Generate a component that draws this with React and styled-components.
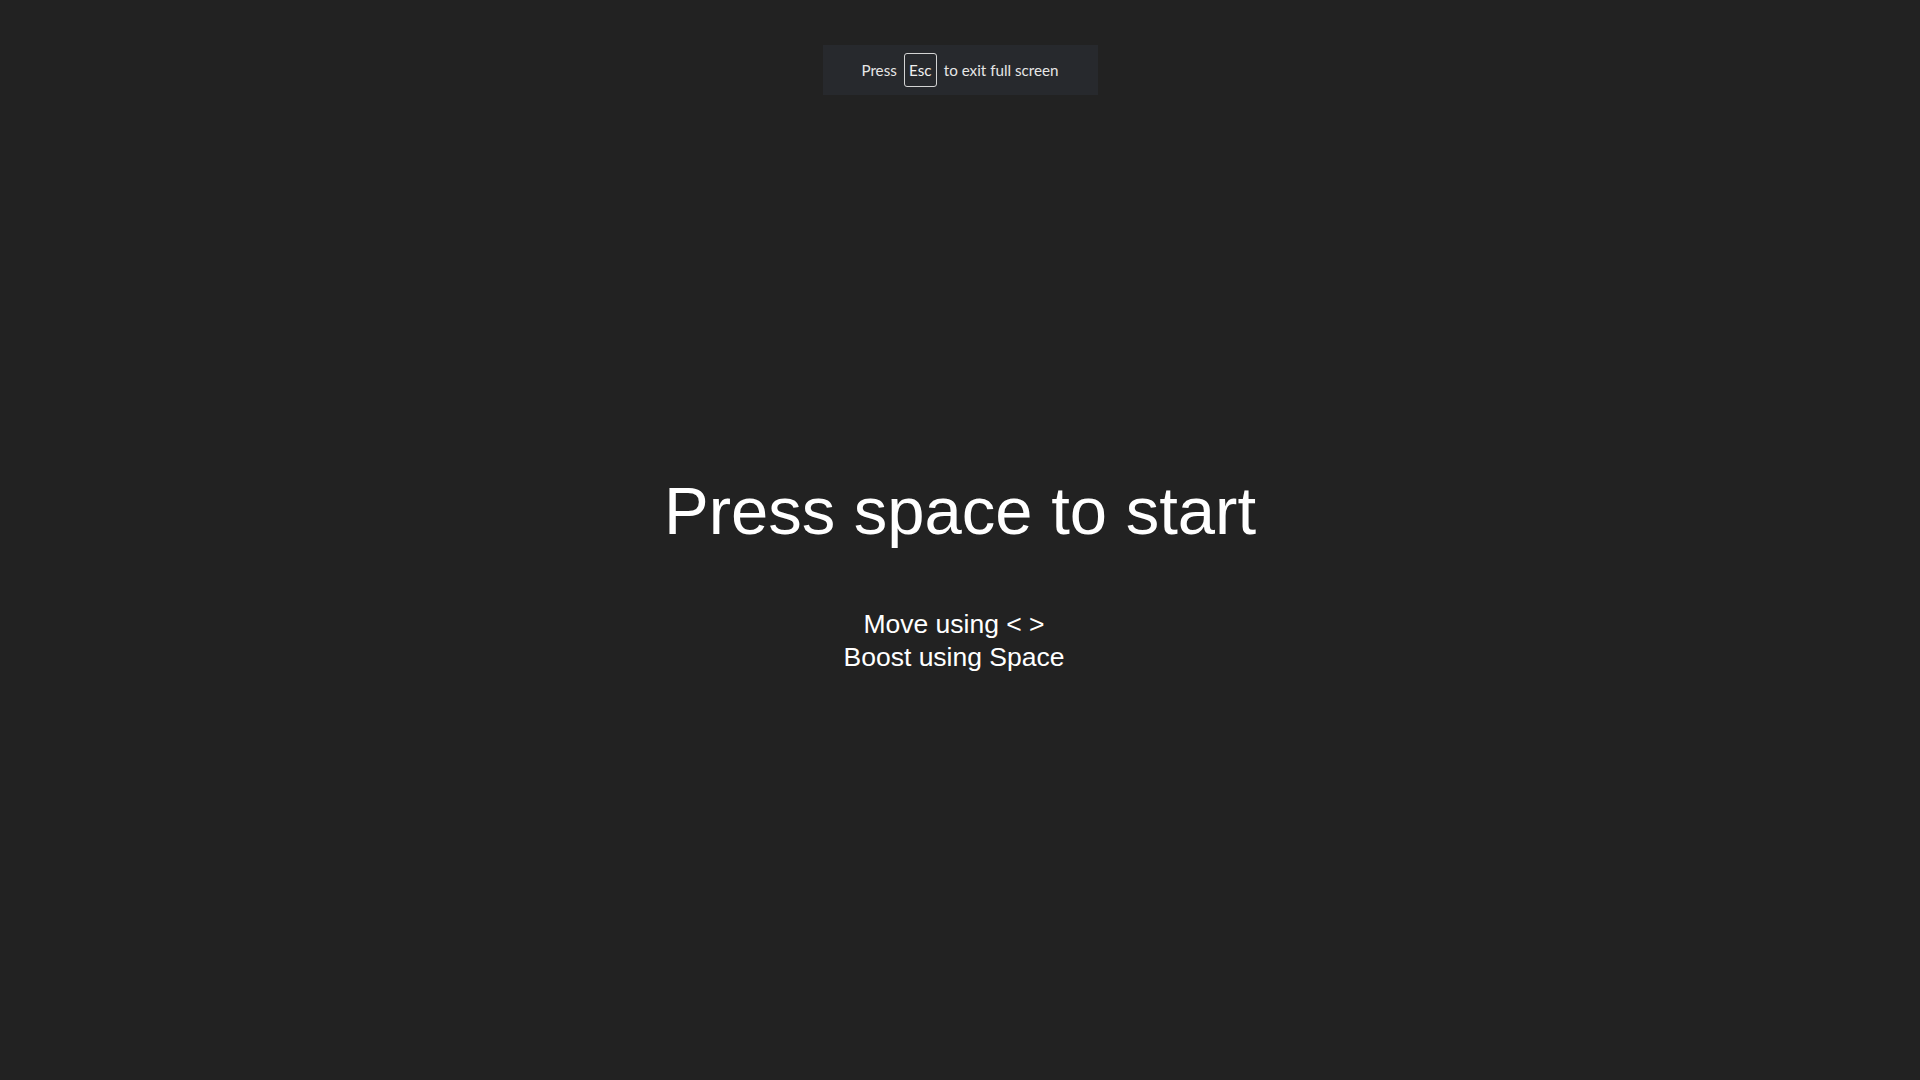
import React from "react";
import styled, { createGlobalStyle } from "styled-components";

const Global = createGlobalStyle`
  html, body {
    margin: 0;
    padding: 0;
    background: #222222;
  }
  body {
    font-family: "Liberation Sans", Arial, sans-serif;
  }
`;

const Screen = styled.div`
  width: 100vw;
  height: 100vh;
  background: #222222;
  display: flex;
  flex-direction: column;
  align-items: center;
  padding-top: 477px;
  box-sizing: border-box;
  overflow: hidden;
  color: #ffffff;
`;

const Notice = styled.div`
  position: fixed;
  top: 45px;
  left: 0;
  right: 0;
  margin: 0 auto;
  width: 275px;
  height: 50px;
  box-sizing: border-box;
  background: #27292d;
  display: flex;
  align-items: center;
  justify-content: center;
  gap: 7px;
  font-family: Lato, "Noto Sans", sans-serif;
  font-size: 15.2px;
  color: #e6e6e6;
  white-space: nowrap;
`;

const Key = styled.span`
  display: inline-flex;
  align-items: center;
  justify-content: center;
  width: 33px;
  height: 34px;
  box-sizing: border-box;
  border: 1px solid #d4d4d4;
  border-radius: 3px;
  color: #f0f0f0;
`;

const Title = styled.h1`
  margin: 0;
  font-family: "Liberation Sans", Arial, sans-serif;
  font-weight: 400;
  font-size: 67px;
  line-height: 67px;
  color: #ffffff;
`;

const Hint = styled.div`
  margin-top: 64px;
  padding-right: 12px;
  font-family: "Liberation Sans", Arial, sans-serif;
  font-size: 26.5px;
  line-height: 33px;
  text-align: center;
  color: #ffffff;
`;

export default function App() {
  return (
    <>
      <Global />
      <Screen>
        <Title>Press space to start</Title>
        <Hint>
          Move using &lt; &gt;
          <br />
          Boost using Space
        </Hint>
      </Screen>
      <Notice>
        <span>Press</span>
        <Key>Esc</Key>
        <span>to exit full screen</span>
      </Notice>
    </>
  );
}
